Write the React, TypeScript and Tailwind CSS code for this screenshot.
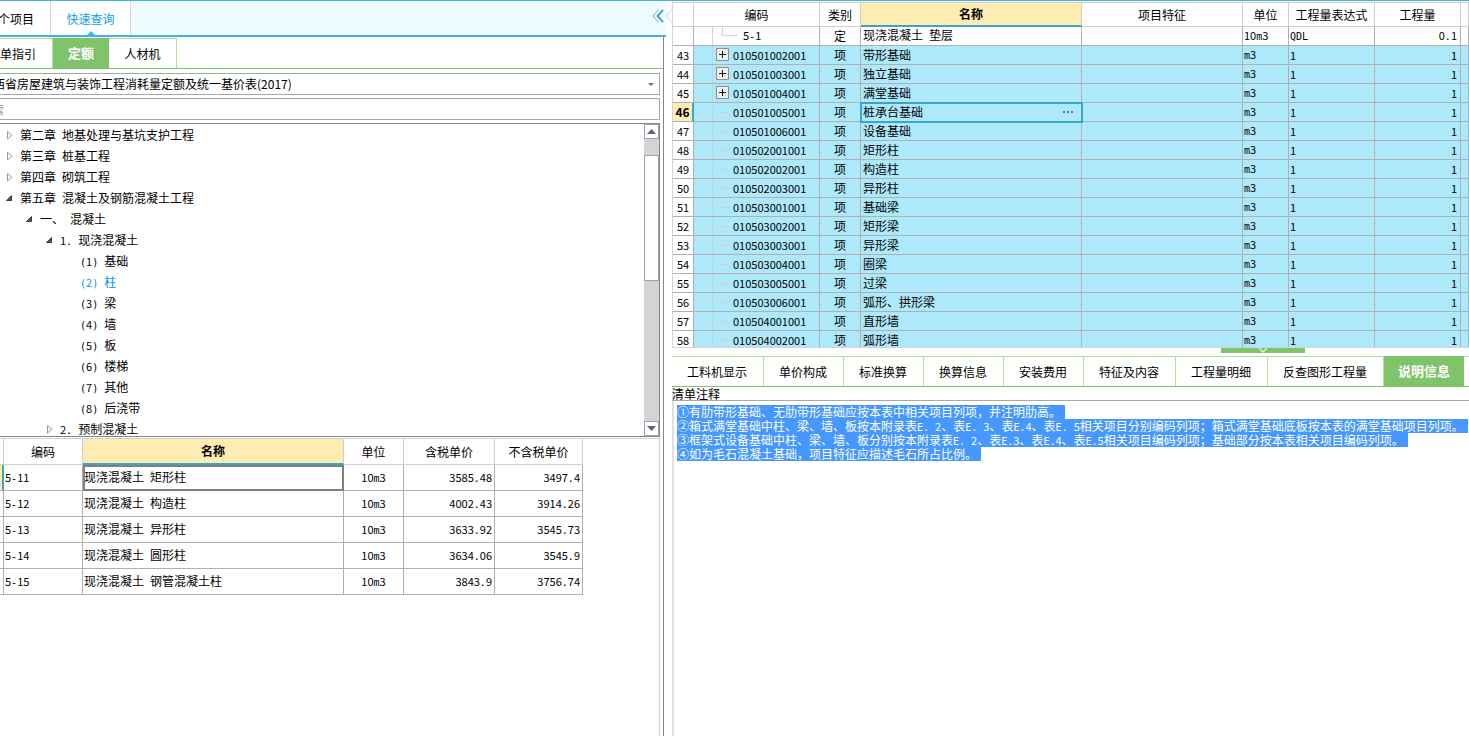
import { Fragment } from "react";
import type { ReactNode } from "react";

// Half-width characters sit on a 6px grid next to the 12px Chinese glyphs
function Mixed({ text }: { text: string }) {
  return (
    <>
      {text.split(/([0-9]+|[^0-9\u0080-\uffff]+)/).map((part, i) => {
        if (/^[0-9]/.test(part)) return <span key={i} className="text-[11px]">{part}</span>;
        if (/^[\x20-\x7e]/.test(part)) return <span key={i} className="font-['DejaVu_Sans_Mono',monospace] text-[10px]">{part}</span>;
        return <Fragment key={i}>{part}</Fragment>;
      })}
    </>
  );
}

const tree = [
  { pad: "pl-1", state: "closed", label: "第二章 地基处理与基坑支护工程" },
  { pad: "pl-1", state: "closed", label: "第三章 桩基工程" },
  { pad: "pl-1", state: "closed", label: "第四章 砌筑工程" },
  { pad: "pl-1", state: "open", label: "第五章 混凝土及钢筋混凝土工程" },
  { pad: "pl-6", state: "open", label: "一、 混凝土" },
  { pad: "pl-11", state: "open", label: "1. 现浇混凝土" },
  { pad: "pl-16", state: "leaf", label: "(1) 基础" },
  { pad: "pl-16", state: "leaf", label: "(2) 柱", active: true },
  { pad: "pl-16", state: "leaf", label: "(3) 梁" },
  { pad: "pl-16", state: "leaf", label: "(4) 墙" },
  { pad: "pl-16", state: "leaf", label: "(5) 板" },
  { pad: "pl-16", state: "leaf", label: "(6) 楼梯" },
  { pad: "pl-16", state: "leaf", label: "(7) 其他" },
  { pad: "pl-16", state: "leaf", label: "(8) 后浇带" },
  { pad: "pl-11", state: "closed", label: "2. 预制混凝土" },
];

const prices = [
  ["5-11", "现浇混凝土 矩形柱", "10m3", "3585.48", "3497.4"],
  ["5-12", "现浇混凝土 构造柱", "10m3", "4002.43", "3914.26"],
  ["5-13", "现浇混凝土 异形柱", "10m3", "3633.92", "3545.73"],
  ["5-14", "现浇混凝土 圆形柱", "10m3", "3634.06", "3545.9"],
  ["5-15", "现浇混凝土 钢管混凝土柱", "10m3", "3843.9", "3756.74"],
];

const items = [
  { no: 43, code: "010501002001", name: "带形基础", plus: true },
  { no: 44, code: "010501003001", name: "独立基础", plus: true },
  { no: 45, code: "010501004001", name: "满堂基础", plus: true },
  { no: 46, code: "010501005001", name: "桩承台基础" },
  { no: 47, code: "010501006001", name: "设备基础" },
  { no: 48, code: "010502001001", name: "矩形柱" },
  { no: 49, code: "010502002001", name: "构造柱" },
  { no: 50, code: "010502003001", name: "异形柱" },
  { no: 51, code: "010503001001", name: "基础梁" },
  { no: 52, code: "010503002001", name: "矩形梁" },
  { no: 53, code: "010503003001", name: "异形梁" },
  { no: 54, code: "010503004001", name: "圈梁" },
  { no: 55, code: "010503005001", name: "过梁" },
  { no: 56, code: "010503006001", name: "弧形、拱形梁" },
  { no: 57, code: "010504001001", name: "直形墙" },
  { no: 58, code: "010504002001", name: "弧形墙" },
];

const detailTabs = ["工料机显示", "单价构成", "标准换算", "换算信息", "安装费用", "特征及内容", "工程量明细", "反查图形工程量"];

const notes = [
  "①有肋带形基础、无肋带形基础应按本表中相关项目列项\uff0c并注明肋高。",
  "②箱式满堂基础中柱、梁、墙、板按本附录表E. 2、表E. 3、表E.4、表E. 5相关项目分别编码列项\uff1b箱式满堂基础底板按本表的满堂基础项目列项。",
  "③框架式设备基础中柱、梁、墙、板分别按本附录表E. 2、表E.3、表E.4、表E.5相关项目编码列项\uff1b基础部分按本表相关项目编码列项。",
  "④如为毛石混凝土基础\uff0c项目特征应描述毛石所占比例。",
];

function TreeArrow({ state }: { state: string }) {
  return (
    <svg width="12" height="12" viewBox="0 0 12 12" className="shrink-0">
      {state === "closed" && <path d="M3.5 1.500v7.5L8 5.200z" fill="none" stroke="#9a9a9a" />}
      {state === "open" && <path d="M7.500 2.500v5H2.500z" fill="#555" stroke="#222" strokeWidth=".8" />}
    </svg>
  );
}

function ScrollButton({ down }: { down?: boolean }) {
  return (
    <button aria-label={down ? "向下滚动" : "向上滚动"} className="flex h-[15px] w-full shrink-0 items-center justify-center border border-[#a0a0a8] bg-white">
      <svg width="9" height="5" viewBox="0 0 9 5">
        <path d={down ? "M0 0h9L4.500 5z" : "M0 5h9L4.500 0z"} fill="#5f6478" />
      </svg>
    </button>
  );
}

function Cell({ children, className = "" }: { children?: ReactNode; className?: string }) {
  return <td className={`overflow-hidden border-r border-b border-[#b0b0b0] p-0 ${className}`}>{children}</td>;
}

function QueryPanel() {
  return (
    <section className="flex w-[666px] shrink-0 flex-col overflow-hidden">
      <nav className="flex h-9 shrink-0 items-stretch border-b-2 border-[#40b4e3] bg-[#effcff]">
        <button className="flex w-[51px] items-center justify-end border-r border-[#d8d8d8] bg-white pt-[2px] pr-4 whitespace-nowrap">个项目</button>
        <button className="relative flex w-20 items-center justify-center border-r border-[#d8d8d8] bg-white pt-[2px] text-[#0a9ff0]">
          快速查询
          <svg width="8" height="4" viewBox="0 0 8 4" className="absolute bottom-0 left-9">
            <path d="M4 0l4 4H0z" fill="#40b4e3" />
          </svg>
        </button>
        <button aria-label="收起" className="mr-[2px] mb-1 ml-auto">
          <svg width="12" height="14" viewBox="0 0 12 14" fill="none">
            <path d="M6.500 1L1 7l5.500 6" stroke="#55bdd6" />
            <path d="M11 1L5.500 7l5.500 6" stroke="#1593b5" strokeWidth="1.600" />
          </svg>
        </button>
      </nav>

      <div className="mr-[2px] flex min-h-0 flex-1 flex-col border-r border-[#85858f] pt-px">
        <nav className="flex h-[31px] shrink-0 border-b border-[#7fc36a]">
          <button className="w-[53px] border-t border-r border-[#aee09a] pr-4 text-right whitespace-nowrap">单指引</button>
          <button className="w-14 bg-[#7fc36a] font-bold text-white text-[13px]">定额</button>
          <button className="w-[68px] border-t border-r border-[#aee09a]">人材机</button>
        </nav>

        <div className="mr-[3px] flex min-h-0 flex-1 flex-col">
          <div className="relative mt-1 -ml-2 flex h-[22px] shrink-0">
            <select aria-label="定额库" className="h-full w-full appearance-none border border-[#a8a8a8] bg-white pr-6">
              <option>西省房屋建筑与装饰工程消耗量定额及统一基价表(2017)</option>
            </select>
            <svg width="6" height="3" viewBox="0 0 6 3" className="pointer-events-none absolute top-[10px] right-[6px]">
              <path d="M0 0h6L3 3z" fill="#6b7080" />
            </svg>
          </div>
          <input aria-label="搜索" placeholder="索" className="mt-[3px] -ml-[9px] h-[22px] shrink-0 border border-[#a8a8a8] bg-white placeholder:text-[#8a8a8a]" />

          <div className="mt-[3px] flex h-[314px] shrink-0 border border-l-0 border-[#85858f]">
            <ul className="flex-1 overflow-hidden pt-px">
              {tree.map((node) => (
                <li key={node.label} className={`flex h-[21px] items-center gap-1 ${node.pad} ${node.active ? "text-[#0a8cff]" : ""}`}>
                  <TreeArrow state={node.state} />
                  <span className="whitespace-pre"><Mixed text={node.label} /></span>
                </li>
              ))}
            </ul>
            <div className="flex w-[15px] flex-col bg-[#d4d4d4]">
              <ScrollButton />
              <div className="mt-4 h-[126px] border border-[#a0a0a8] bg-white" />
              <div className="mt-auto"><ScrollButton down /></div>
            </div>
          </div>

          <div className="mt-px min-h-0 flex-1 border-t border-r border-[#d0d0d0]">
            <table className="w-[583px] table-fixed border-separate border-spacing-0">
              <colgroup>
                <col className="w-1" />
                <col className="w-[79px]" />
                <col className="w-[261px]" />
                <col className="w-[60px]" />
                <col className="w-[91px]" />
                <col className="w-[88px]" />
              </colgroup>
              <thead>
                <tr className="h-[26px]">
                  <th className="border-r border-b border-[#d0d0d0] p-0" />
                  <th className="border-r border-b border-[#d0d0d0] p-0 font-normal">编码</th>
                  <th className="border-r border-b-2 border-r-[#d0d0d0] border-b-[#38a5cf] bg-[#ffecb3] p-0">名称</th>
                  <th className="border-r border-b border-[#d0d0d0] p-0 font-normal">单位</th>
                  <th className="border-r border-b border-[#d0d0d0] p-0 font-normal">含税单价</th>
                  <th className="border-r border-b border-[#d0d0d0] p-0 font-normal">不含税单价</th>
                </tr>
              </thead>
              <tbody>
                {prices.map(([code, name, unit, taxed, untaxed], i) => (
                  <tr key={code} className="h-[26px]">
                    <Cell className={i === 0 ? "border-r-2 border-r-[#38a5cf] bg-[#ffecb3]" : ""} />
                    <Cell className="pl-px"><Mixed text={code} /></Cell>
                    <Cell className={i === 0 ? "pl-px outline-2 -outline-offset-2 outline-[#808080]" : "pl-px"}><Mixed text={name} /></Cell>
                    <Cell className="text-center"><Mixed text={unit} /></Cell>
                    <Cell className="pr-[2px] text-right"><Mixed text={taxed} /></Cell>
                    <Cell className="pr-[2px] text-right"><Mixed text={untaxed} /></Cell>
                  </tr>
                ))}
              </tbody>
            </table>
          </div>
        </div>
      </div>
    </section>
  );
}

function BillTable() {
  return (
    <div className="h-[347px] shrink-0 overflow-hidden border-b border-l border-[#d4d4d4] pt-px">
      <table className="w-full table-fixed border-separate border-spacing-0">
        <colgroup>
          <col className="w-[21px]" />
          <col className="w-[126px]" />
          <col className="w-[41px]" />
          <col className="w-[221px]" />
          <col className="w-[161px]" />
          <col className="w-[46px]" />
          <col className="w-[86px]" />
          <col className="w-[86px]" />
          <col />
        </colgroup>
        <thead>
          <tr className="h-[25px] *:border-t *:border-r *:border-b *:border-[#d0d0d0] *:p-0 *:font-normal">
            <th />
            <th>编码</th>
            <th>类别</th>
            <th className="border-b-2! border-b-[#38a5cf]! bg-[#ffecb3] font-bold!">名称</th>
            <th>项目特征</th>
            <th>单位</th>
            <th>工程量表达式</th>
            <th>工程量</th>
            <th />
          </tr>
        </thead>
        <tbody>
          <tr className="h-[19px]">
            <Cell />
            <Cell>
              <div className="flex h-[18px] items-center">
                <span className="ml-[18px] h-full w-[10px] shrink-0 border-l border-[#d4d4d4]" />
                <span className="mb-[9px] h-[9px] w-4 border-b border-l border-[#d4d4d4]" />
                <span className="ml-[5px]"><Mixed text="5-1" /></span>
              </div>
            </Cell>
            <Cell className="text-center">定</Cell>
            <Cell className="pl-[2px]"><Mixed text="现浇混凝土 垫层" /></Cell>
            <Cell />
            <Cell className="pl-px"><Mixed text="10m3" /></Cell>
            <Cell className="pl-px"><Mixed text="QDL" /></Cell>
            <Cell className="pr-[3px] text-right"><Mixed text="0.1" /></Cell>
            <Cell />
          </tr>
          {items.map((item) => (
            <tr key={item.no} className="h-[19px] bg-[#aee9fb]">
              <Cell className={item.no === 46 ? "border-r-2 border-r-[#38a5cf] bg-[#ffecb3] text-center font-bold text-[12px]" : "bg-white text-center text-[11px]"}>{item.no}</Cell>
              <Cell>
                <div className="flex h-[18px] items-center">
                  <span className="ml-[18px] h-full w-1 shrink-0 border-l border-[#c8d4d8]" />
                  {item.plus ? (
                    <button aria-label="展开" className="mb-px size-[13px] shrink-0">
                      <svg width="13" height="13" viewBox="0 0 13 13">
                        <path d="M.5.5h12v12H.5z" fill="#eef0f2" stroke="#8c8c8c" />
                        <path d="M3 6.500h7M6.500 3v7" stroke="#111" />
                      </svg>
                    </button>
                  ) : (
                    <span className="h-px w-[13px] shrink-0 bg-[#c8d4d8]" />
                  )}
                  <span className="ml-1 text-[11px]">{item.code}</span>
                </div>
              </Cell>
              <Cell className="text-center">项</Cell>
              <Cell className={item.no === 46 ? "outline-2 -outline-offset-1 outline-[#38a5cf]" : ""}>
                <div className="flex items-center justify-between pr-[7px] pl-[2px]">
                  {item.name}
                  {item.no === 46 && (
                    <button aria-label="更多">
                      <svg width="11" height="2" viewBox="0 0 11 2">
                        <path d="M0 0h2v2H0zM4 0h2v2H4zM8 0h2v2H8z" fill="#3a86c8" />
                      </svg>
                    </button>
                  )}
                </div>
              </Cell>
              <Cell />
              <Cell className="pl-px"><Mixed text="m3" /></Cell>
              <Cell className="pl-px text-[11px]">1</Cell>
              <Cell className="pr-[3px] text-right text-[11px]">1</Cell>
              <Cell />
            </tr>
          ))}
        </tbody>
      </table>
    </div>
  );
}

function BillPanel() {
  return (
    <section className="flex min-w-0 flex-1 flex-col">
      <BillTable />
      <button aria-label="收起明细" className="mr-[164px] flex h-[5px] w-[84px] shrink-0 justify-center self-end bg-[#7fc36a]">
        <svg width="10" height="5" viewBox="0 0 10 5" fill="none">
          <path d="M1 0l4 4 4-4" stroke="#d6efcd" strokeWidth="1.500" />
        </svg>
      </button>
      <nav className="mt-[3px] flex h-[31px] shrink-0 border-t border-b border-t-[#aee09a] border-b-[#7fc36a]">
        {detailTabs.map((tab) => (
          <button key={tab} className="shrink-0 border-r border-[#aee09a] pr-4 pl-[15px] whitespace-nowrap">{tab}</button>
        ))}
        <button className="-mt-px w-20 shrink-0 bg-[#7fc36a] text-[13px] font-bold text-white">说明信息</button>
      </nav>
      <div className="flex min-h-0 flex-1 flex-col border-l-2 border-[#dfdfe6]">
        <h2 className="-ml-[2px] h-[14px] shrink-0 border-b border-[#a8a8a8] leading-[14px]">清单注释</h2>
        <div className="overflow-hidden pt-1 pl-[3px] leading-[14px] whitespace-pre text-white">
          {notes.map((line) => (
            <p key={line} className="h-[14px]">
              <span className="inline-block h-[14px] bg-[#4698ff] pr-1"><Mixed text={line} /></span>
            </p>
          ))}
        </div>
      </div>
    </section>
  );
}

export default function App() {
  return (
    <main className="flex h-screen overflow-hidden border-t border-[#40b4e3] bg-white font-['Noto_Sans_CJK_SC',sans-serif] text-[12px] leading-[16px] text-black">
      <QueryPanel />
      <div className="w-[6px] shrink-0 pt-2">
        <svg width="6" height="14" viewBox="0 0 6 14" fill="none">
          <path d="M5.500 0L.5 7l5 7" stroke="#d4d4d4" />
        </svg>
      </div>
      <BillPanel />
    </main>
  );
}
